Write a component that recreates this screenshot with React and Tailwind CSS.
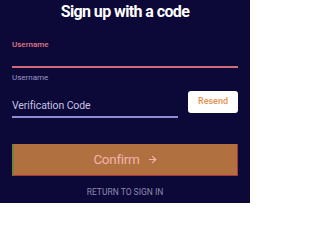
import React from 'react';
import { ArrowRight } from 'lucide-react';

export default function App() {
  return (
    <div
      className="w-[250px] h-[203px] overflow-hidden bg-[#0c0838] flex flex-col px-3"
      style={{ fontFamily: 'Roboto, "Noto Sans", sans-serif' }}
    >
      {/* Title */}
      <h1 className="mt-[1px] text-center text-white font-bold text-[16px] leading-[22px] tracking-[-0.6px]">
        Sign up with a code
      </h1>

      {/* Username field */}
      <div className="mt-[15px]">
        <label className="block text-[8px] leading-[14px] text-[#e07a84] font-medium">Username</label>
        <div className="h-[14px]" />
        <div className="h-[2px] bg-[#d06b78]" />
        <p className="mt-[3px] text-[8px] leading-[14px] text-[#9b99c4]">Username</p>
      </div>

      {/* Verification code + resend */}
      <div className="mt-[4px] flex items-end gap-[10px]">
        <div className="flex-1">
          <div className="text-[10.5px] leading-[16px] text-[#c4c2e2] pt-[9px] pb-[2px] tracking-[-0.1px]">Verification Code</div>
          <div className="h-[1.5px] bg-[#8f8ccf]" />
        </div>
        <button className="w-[50px] h-[22px] mb-[5px] bg-white rounded-[3px] text-[9px] text-[#e6904f] font-medium">
          Resend
        </button>
      </div>

      {/* Confirm */}
      <button className="mt-[26px] h-[32px] w-full bg-[#b0703f] border-l-2 border-l-[#76803e] border-r border-r-[#a8343c] border-b border-b-[#a8343c] flex items-center justify-center gap-[7px] text-[13.5px] text-[#f2b4ac] tracking-[-0.3px]">
        Confirm
        <ArrowRight className="w-[11px] h-[11px]" strokeWidth={2.5} />
      </button>

      <p className="mt-[9px] text-center text-[8.5px] leading-[14px] text-[#8d8bb0] uppercase">
        Return to sign in
      </p>
    </div>
  );
}
